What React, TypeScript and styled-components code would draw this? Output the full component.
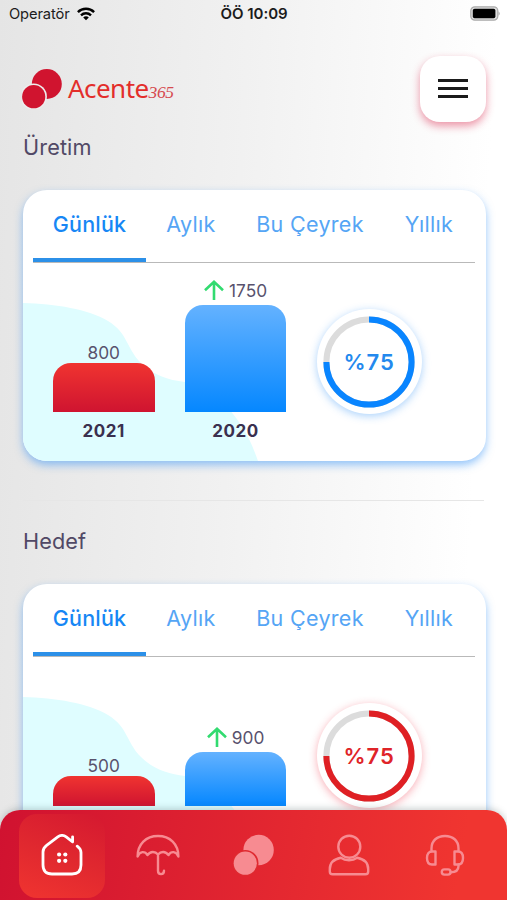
import React from "react";
import styled, { createGlobalStyle } from "styled-components";

const GlobalStyle = createGlobalStyle`
  * { box-sizing: border-box; }
  body { margin: 0; overflow: hidden; font-family: Inter, "Liberation Sans", sans-serif; }
`;

const Screen = styled.div`
  position: relative;
  width: 507px;
  height: 900px;
  overflow: hidden;
  background: linear-gradient(93deg, #e5e5e5 0%, #f1f1f1 45%, #ffffff 90%);
`;

const StatusBar = styled.header`
  display: grid;
  grid-template-columns: 1fr auto 1fr;
  align-items: center;
  height: 28px;
  padding: 0 6px 1px 7px;
  color: #1c1c1c;
`;

const Carrier = styled.div`
  display: flex;
  align-items: center;
  gap: 7px;
  padding-left: 2px;
  font-size: 14.7px;
  letter-spacing: -0.12px;
`;

const Clock = styled.div`
  font-size: 15px;
  font-weight: 600;
  letter-spacing: -0.02px;
`;

const Battery = styled.svg`
  justify-self: end;
  display: block;
`;

const TopBar = styled.div`
  display: flex;
  justify-content: space-between;
  height: 94px;
  padding: 28px 21px 0 22px;
`;

const Brand = styled.div`
  display: flex;
  height: 66px;
  padding-top: 13px;
`;

const BrandName = styled.span`
  margin: 2px 0 0 5px;
  font: 26px/34px "Noto Sans", "Open Sans", sans-serif;
  letter-spacing: -0.55px;
  color: #e32e2b;
`;

const BrandSuffix = styled.span`
  margin-top: 6px;
  font: italic 17.5px/34px "Liberation Serif", serif;
  letter-spacing: -0.4px;
  color: #d64a50;
`;

const MenuButton = styled.button`
  display: flex;
  flex-direction: column;
  align-items: center;
  justify-content: center;
  gap: 5px;
  width: 66px;
  height: 66px;
  padding: 0 0 1px;
  border: 0;
  border-radius: 20px;
  background: #fff;
  box-shadow: 0 4px 9px rgba(214, 22, 63, 0.45);
`;

const MenuLine = styled.span`
  width: 30px;
  height: 3px;
  background: #1b1b1b;
`;

const Section = styled.section`
  padding: 0 21.5px 0 23px;
`;

const SectionTitle = styled.h2<{ $space: number }>`
  margin: 0;
  padding-top: ${(p) => p.$space}px;
  height: ${(p) => p.$space + 56}px;
  font-size: 21.7px;
  line-height: 26px;
  font-weight: 400;
  letter-spacing: 0.1px;
  color: #514966;
`;

const Card = styled.article`
  position: relative;
  isolation: isolate;
  height: 271px;
  border-radius: 24px;
  padding: 0 10.5px 0 10px;
  background: #fff;
  box-shadow: 0 4px 9px rgba(43, 142, 247, 0.5);
`;

const Wave = styled.svg`
  position: absolute;
  left: 0;
  bottom: 0;
  z-index: -1;
  border-bottom-left-radius: 24px;
`;

const Tabs = styled.nav`
  display: grid;
  grid-template-columns: 113px 90px 148px 90px;
  height: 73px;
  border-bottom: 1px solid #b9b9b9;
`;

const Tab = styled.button<{ $active: boolean }>`
  height: 72px;
  padding: 0 0 ${(p) => (p.$active ? 0 : 4)}px;
  border: 0;
  border-bottom: ${(p) => (p.$active ? "4px solid #2c90e8" : "0")};
  background: none;
  font: ${(p) => (p.$active ? 500 : 400)} 21.5px Inter, sans-serif;
  letter-spacing: ${(p) => (p.$active ? 0.2 : 0.3)}px;
  white-space: nowrap;
  color: ${(p) => (p.$active ? "#1787f5" : "#55a5f5")};
`;

const Chart = styled.div`
  display: flex;
  height: 198px;
  padding-left: 20px;
`;

const Column = styled.div`
  display: flex;
  flex-direction: column;
  justify-content: flex-end;
  width: 101.5px;
  height: 188px;
  margin-right: 30.3px;
`;

const Value = styled.div<{ $rising?: boolean }>`
  display: flex;
  align-items: center;
  justify-content: center;
  gap: 5px;
  height: 22px;
  margin-bottom: ${(p) => (p.$rising ? 4 : 0)}px;
  font-size: 17.3px;
  color: #58526d;
`;

const Bar = styled.div<{ $tone: Tone }>`
  border-radius: 18px 18px 0 0;
  background: ${(p) =>
    p.$tone === "red"
      ? "linear-gradient(#f03430, #cf1430)"
      : "linear-gradient(#64b2ff, #0587ff)"};
`;

const Year = styled.div`
  height: 39px;
  padding-top: 9px;
  line-height: 20px;
  font-size: 17px;
  font-weight: 700;
  letter-spacing: 0.6px;
  text-align: center;
  color: #3a304f;
`;

const Gauge = styled.div<{ $tone: Tone }>`
  display: grid;
  place-items: center;
  width: 105px;
  height: 105px;
  margin-top: 46px;
  border-radius: 50%;
  background: #fff;
  box-shadow: 0 2px 9px
    ${(p) => (p.$tone === "red" ? "rgba(240,40,60,.38)" : "rgba(40,140,245,.4)")};
  > * { grid-area: 1 / 1; }
`;

const GaugeText = styled.span<{ $tone: Tone }>`
  font-size: 22px;
  font-weight: 600;
  letter-spacing: 0.9px;
  color: ${(p) => (p.$tone === "red" ? "#df2428" : "#2389ee")};
`;

const Divider = styled.hr`
  height: 1px;
  margin: 39px 23px 0;
  border: 0;
  background: #e6e6e6;
`;

const BottomNav = styled.nav`
  position: absolute;
  inset: 810px 0 0;
  display: grid;
  grid-template-columns: repeat(5, 1fr);
  padding: 4px 14px 2px;
  border-radius: 20px 20px 0 0;
  background: linear-gradient(100deg, #d01230, #f03530 90%);
  box-shadow: 0 -2px 6px rgba(70, 90, 90, 0.25);
`;

const NavItem = styled.button<{ $active?: boolean }>`
  display: grid;
  place-items: center;
  width: 86px;
  height: 84px;
  margin-left: 5px;
  padding: 0 0 2px;
  border: 0;
  border-radius: 18px;
  color: ${(p) => (p.$active ? "#fff" : "#f78b91")};
  background: ${(p) =>
    p.$active ? "linear-gradient(20deg, #f03430 0%, #e0282f 50%, #d61a30 95%)" : "none"};
`;

const Icon = styled.svg<{ $weight?: number }>`
  display: block;
  fill: none;
  stroke: currentColor;
  stroke-width: ${(p) => p.$weight ?? 2.4};
  stroke-linecap: round;
  stroke-linejoin: round;
`;

type Tone = "red" | "blue";

type Report = {
  title: string;
  space: number;
  tone: Tone;
  bars: { year: string; value: string; height: number; tone: Tone; rising?: boolean }[];
};

const reports: Report[] = [
  {
    title: "Üretim",
    space: 12,
    tone: "blue",
    bars: [
      { year: "2021", value: "800", height: 49, tone: "red" },
      { year: "2020", value: "1750", height: 107, tone: "blue", rising: true },
    ],
  },
  {
    title: "Hedef",
    space: 27,
    tone: "red",
    bars: [
      { year: "2021", value: "500", height: 30, tone: "red" },
      { year: "2020", value: "900", height: 54, tone: "blue", rising: true },
    ],
  },
];

const tabs = ["Günlük", "Aylık", "Bu Çeyrek", "Yıllık"];

function WifiIcon() {
  return (
    <svg width="18" height="14" viewBox="0 0 18 14" fill="none" stroke="#000" strokeWidth="2.4">
      <path d="M.9 5.1C5.3.7 12.7.7 17.1 5.1" />
      <path d="M4 8.3C6.8 5.6 11.2 5.6 14 8.3" />
      <path d="M9 13.2 6.2 10.4C7.7 9 10.3 9 11.8 10.4Z" fill="#000" stroke="none" />
    </svg>
  );
}

function LogoMark() {
  return (
    <svg width="41" height="40" viewBox="0 0 41 40">
      <circle cx="24.8" cy="15" r="15" fill="#d0142f" />
      <circle cx="11.7" cy="27.7" r="13.2" fill="#ededed" />
      <circle cx="11.7" cy="27.7" r="11.6" fill="#d0142f" />
    </svg>
  );
}

function UpArrow() {
  return (
    <svg width="20" height="20" viewBox="0 0 20 20" fill="none" stroke="#32db70" strokeWidth="2.6">
      <path d="M10 20V2M1 10.3 10 1.8 19 10.3" />
    </svg>
  );
}

function GaugeRing({ tone }: { tone: Tone }) {
  return (
    <svg width="92" height="92" viewBox="0 0 92 92" fill="none" strokeWidth="6">
      <circle cx="46" cy="46" r="42.6" stroke="#dcdcdc" />
      <path
        d="M46 3.4A42.6 42.6 0 1 1 3.4 46"
        stroke={tone === "red" ? "#df2024" : "#0985ff"}
      />
    </svg>
  );
}

function ReportCard({ report }: { report: Report }) {
  return (
    <Card>
      <Wave width="240" height="158" viewBox="0 113 240 158">
        <path
          d="M0 113C33 114 65 119 85 131C105 143 103 158 118 173C130 185 145 190 162 192C185 196 196 205 210 224C224 241 230 257 235 271H0Z"
          fill="#dffdff"
        />
      </Wave>
      <Tabs>
        {tabs.map((label, i) => (
          <Tab key={label} $active={i === 0}>{label}</Tab>
        ))}
      </Tabs>
      <Chart>
        {report.bars.map((bar) => (
          <Column key={bar.year}>
            <Value $rising={bar.rising}>
              {bar.rising && <UpArrow />}
              {bar.value}
            </Value>
            <Bar $tone={bar.tone} style={{ height: bar.height }} />
            <Year>{bar.year}</Year>
          </Column>
        ))}
        <Gauge $tone={report.tone}>
          <GaugeRing tone={report.tone} />
          <GaugeText $tone={report.tone}>%75</GaugeText>
        </Gauge>
      </Chart>
    </Card>
  );
}

function HomeIcon() {
  return (
    <Icon width="42" height="42" viewBox="0 0 42 42" $weight={2.8}>
      <path d="M36.2 12.2C38.6 14 40 15.5 40 18.5V31Q40 40 31 40H11Q2 40 2 31V18C2 14.8 3.1 13.2 5.6 11.3L16.8 2.9Q21-.1 25.2 2.9L31.6 7.8V2.8" />
      <g fill="currentColor" stroke="none">
        <circle cx="18.1" cy="20.5" r="2.1" />
        <circle cx="24.3" cy="20.5" r="2.1" />
        <circle cx="18.1" cy="26.8" r="2.1" />
        <circle cx="24.3" cy="26.8" r="2.1" />
      </g>
    </Icon>
  );
}

function UmbrellaIcon() {
  return (
    <Icon width="44" height="42" viewBox="0 0 44 42">
      <path d="M1.6 22.5C1.6 10 10 2 22 2S42.4 10 42.4 22.5C40 16.8 35 17 32.5 21C29.5 17 25 17 22 20.5C19 17 14.5 17 11.5 21C9 17 4 16.8 1.6 22.5ZM22 20.5V36.8C22 41.2 28 41.2 28 36.8" />
    </Icon>
  );
}

function CirclesIcon() {
  return (
    <svg width="42" height="42" viewBox="0 0 42 42">
      <circle cx="25.6" cy="16" r="15.2" fill="#f78b91" />
      <circle cx="12.3" cy="29.2" r="13.2" fill="#df2930" />
      <circle cx="12.3" cy="29.2" r="11.6" fill="#f78b91" />
    </svg>
  );
}

function PersonIcon() {
  return (
    <Icon width="42" height="42" viewBox="0 0 42 42">
      <circle cx="21.3" cy="12.7" r="11" />
      <path d="M12.8 23.8C5.7 25.2 1.8 29 1.8 35.2V37.5Q1.8 40.2 4.5 40.2H37.5Q40.2 40.2 40.2 37.5V35.2C40.2 29 36.3 25.2 29.2 23.8C24.5 27 17.5 27 12.8 23.8Z" />
    </Icon>
  );
}

function HeadsetIcon() {
  return (
    <Icon width="40" height="42" viewBox="0 0 40 42">
      <path d="M6.5 17V14.5C6.5 6.5 12.2 2 20 2S33.5 6.5 33.5 14.5V17" />
      <path d="M10.5 17.5H7C3.8 17.5 2 20 2 24S3.8 30.5 7 30.5H10.5ZM29.5 17.5H33C36.2 17.5 38 20 38 24S36.2 30.5 33 30.5H29.5Z" />
      <path d="M33.5 30.5V32C33.5 36.5 30 38.3 25.6 38.3" />
      <rect x="16.8" y="35.4" width="8.8" height="5.2" rx="2.6" />
    </Icon>
  );
}

export default function App() {
  return (
    <Screen>
      <GlobalStyle />
      <StatusBar>
        <Carrier>Operatör <WifiIcon /></Carrier>
        <Clock>ÖÖ 10:09</Clock>
        <Battery width="31" height="15" viewBox="0 0 31 15">
          <rect x=".8" y=".8" width="27" height="13.4" rx="4" fill="#dedede" stroke="#aaa" strokeWidth="1.2" />
          <rect x="2.8" y="2.8" width="22.6" height="9.4" rx="1.8" />
          <path d="M28.5 5.2Q31 7.5 28.5 9.8Z" fill="#aaa" />
        </Battery>
      </StatusBar>
      <TopBar>
        <Brand>
          <LogoMark />
          <BrandName>Acente</BrandName>
          <BrandSuffix>365</BrandSuffix>
        </Brand>
        <MenuButton aria-label="Menu">
          <MenuLine />
          <MenuLine />
          <MenuLine />
        </MenuButton>
      </TopBar>
      {reports.map((report, i) => (
        <React.Fragment key={report.title}>
          {i > 0 && <Divider />}
          <Section>
            <SectionTitle $space={report.space}>{report.title}</SectionTitle>
            <ReportCard report={report} />
          </Section>
        </React.Fragment>
      ))}
      <BottomNav>
        <NavItem $active aria-label="Home"><HomeIcon /></NavItem>
        <NavItem aria-label="Insurance"><UmbrellaIcon /></NavItem>
        <NavItem aria-label="Acente365"><CirclesIcon /></NavItem>
        <NavItem aria-label="Profile"><PersonIcon /></NavItem>
        <NavItem aria-label="Support"><HeadsetIcon /></NavItem>
      </BottomNav>
    </Screen>
  );
}
